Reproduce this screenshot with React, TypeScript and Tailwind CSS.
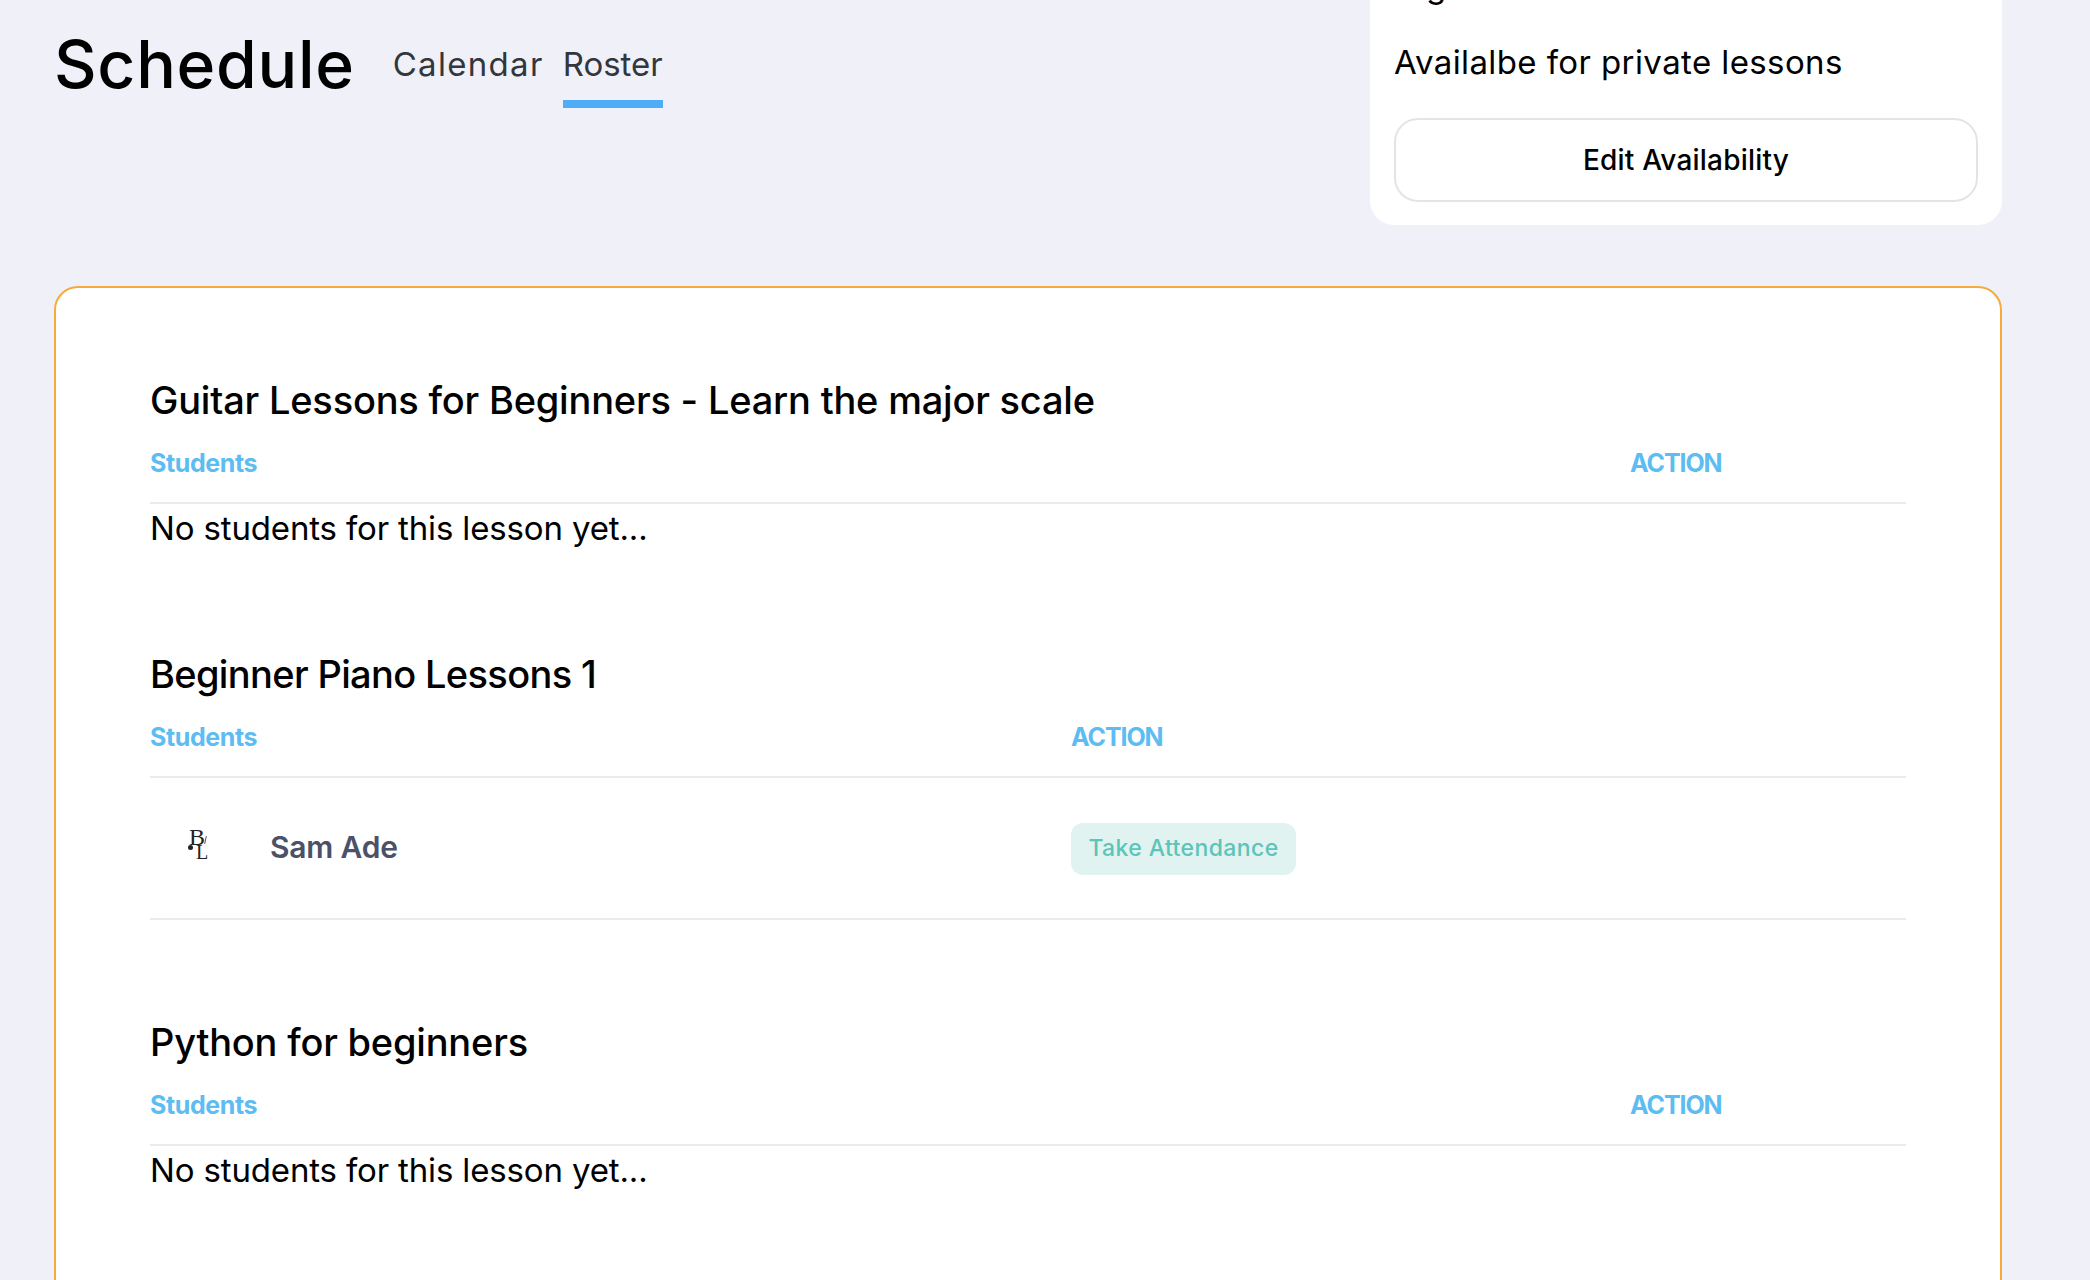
const Head = ({ col }: { col: string }) => (
  <div className="flex items-start h-[66px] pt-[9px] border-b-2 border-[#e9ecef] text-[25px] leading-[32px] font-bold text-[#5dbcf2]">
    <span className={col}><span className="tracking-[-0.4px]">Students</span></span>
    <span className="tracking-[-1.1px]">ACTION</span>
  </div>
)

const EmptyLesson = ({ title }: { title: string }) => (
  <section>
    <h2 className="text-[38px] leading-[48px] font-medium text-black tracking-[-0.2px]">{title}</h2>
    <div className="mt-[14px]">
      <Head col="w-[1480px]" />
    </div>
    <p className="text-[33px] leading-[48px] text-black tracking-[-0.15px]">No students for this lesson yet...</p>
  </section>
)

const App = () => {
  return (
    <div className="h-screen overflow-hidden bg-[#eff0f8] font-['Inter',sans-serif]">
      <div className="flex justify-between items-start pl-[54px] pr-[88px]">
        <div className="flex items-start">
          <h1 className="mt-[24px] text-[66px] leading-[80px] font-medium text-black tracking-[0.7px]">Schedule</h1>
          <nav className="ml-[38px] mt-[40px] flex gap-[19px] text-[33px] leading-[48px] text-[#33363b]">
            <span className="tracking-[1.3px]">Calendar</span>
            <span className="h-[68px] border-b-[8px] border-[#4fadf7]">Roster</span>
          </nav>
        </div>
        <aside className="w-[632px] h-[225px] bg-white rounded-b-[24px] px-[24px] flex flex-col overflow-hidden">
          <div className="h-[5px] overflow-hidden relative">
            <span className="absolute left-[32px] top-[-38px] text-[33px] leading-[48px] text-black">g</span>
          </div>
          <p className="mt-[33px] text-[33px] leading-[48px] text-black tracking-[0.4px]">Availalbe for private lessons</p>
          <button className="mt-[32px] h-[84px] rounded-[24px] border-2 border-[#e4e4e7] bg-white text-[28px] font-medium text-black tracking-[0.2px]">
            Edit Availability
          </button>
        </aside>
      </div>

      <main className="mt-[61px] ml-[54px] mr-[88px] bg-white border-2 border-[#f5aa3c] rounded-[24px] pt-[88px] px-[94px] pb-[140px]">
        <EmptyLesson title="Guitar Lessons for Beginners - Learn the major scale" />

        <section className="mt-[98px]">
          <h2 className="text-[38px] leading-[48px] font-medium text-black tracking-[-0.65px]">Beginner Piano Lessons 1</h2>
          <div className="mt-[14px]">
            <Head col="w-[921px]" />
          </div>
          <div className="flex items-center h-[142px] border-b-2 border-[#e9ecef]">
            <div className="w-[120px] pl-[38px] -mt-[8px]">
              <div className="relative w-[20px] h-[31px] font-['Liberation_Serif',serif] text-[#222]">
                <span className="absolute left-[1px] top-[-4px] text-[24px] leading-[24px]">B</span>
                <span className="absolute left-[8px] top-[13px] text-[20px] leading-[20px]">L</span>
                <span className="absolute left-0 top-[16px] w-[5px] h-[5px] rounded-full bg-[#222]" />
                <span className="absolute left-[17px] top-[7px] w-px h-[8px] rotate-12 bg-[#555]" />
              </div>
            </div>
            <span className="w-[801px] -mt-[2px] text-[30px] font-semibold text-[#4a5168] tracking-[-0.2px]">Sam Ade</span>
            <span className="inline-flex items-center justify-center mt-[1px] w-[225px] h-[52px] rounded-[12px] bg-[#e0f3f1] text-[23px] font-medium text-[#5cc4b8] tracking-[0.4px]">
              Take Attendance
            </span>
          </div>
        </section>

        <div className="mt-[98px]">
          <EmptyLesson title="Python for beginners" />
        </div>
      </main>
    </div>
  )
}

export default App
